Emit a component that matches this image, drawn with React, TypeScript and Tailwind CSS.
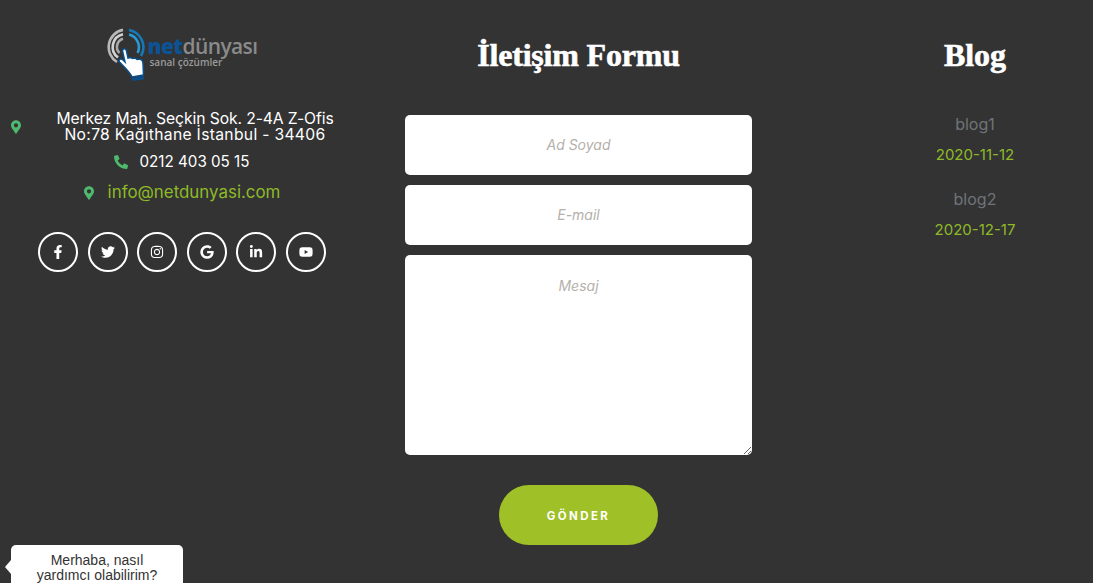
import React from 'react';
import {
  FaFacebookF,
  FaTwitter,
  FaInstagram,
  FaGoogle,
  FaLinkedinIn,
  FaYoutube,
  FaMapMarkerAlt,
  FaPhoneAlt,
} from 'react-icons/fa';

const socials = [FaFacebookF, FaTwitter, FaInstagram, FaGoogle, FaLinkedinIn, FaYoutube];

const blogs = [
  { title: 'blog1', date: '2020-11-12' },
  { title: 'blog2', date: '2020-12-17' },
];

const Logo: React.FC = () => (
  <div className="relative ml-[1px] h-[54px] w-[152px]">
    <svg viewBox="0 0 40 54" className="absolute left-0 top-0 h-[54px] w-[40px]" fill="none">
      <g strokeWidth="2.6">
        <path d="M16 1.9 A17.5 17.5 0 0 0 10 34" stroke="#b8b8b8" />
        <path d="M16 6.3 A13 13 0 0 0 11 29.5" stroke="#d2d2d2" />
        <path d="M16 10.8 A8.5 8.5 0 0 0 12.5 25" stroke="#a8a8a8" />
        <path d="M22 2 A17.5 17.5 0 0 1 34 28" stroke="#1479b8" />
        <path d="M22 6.5 A13 13 0 0 1 30.5 25" stroke="#2a9ad6" />
      </g>
      <path
        d="M15.5 23 C15.5 20 19 20 19.5 23 L21 30 L23.5 29.5 L25.5 30.5 L28 30 L30 31.5 L32.5 31 C35 31.5 36 33 36 35.5 L36.5 47 L25 49 C23 44 17.5 39.5 12.5 34 C11 31.5 13.5 30 16 32 L18 34 Z"
        fill="#ffffff"
        stroke="#0b4f8a"
        strokeWidth="1.5"
      />
      <path d="M24.5 50 L36.5 48 L37 51.5 L25 53 Z" fill="#0b4f8a" />
    </svg>
    <div className="absolute left-[41px] top-[9px] whitespace-nowrap font-['Open_Sans',sans-serif] text-[21px] leading-[18px] font-semibold tracking-[-0.6px] text-[#8a8a8a]">
      <span className="font-extrabold text-[#0b5394]">net</span>dünyası
    </div>
    <div className="absolute left-[43px] top-[29px] whitespace-nowrap font-['Open_Sans',sans-serif] text-[10px] leading-[11px] font-semibold text-[#9a9a9a]">
      sanal çözümler
    </div>
  </div>
);

export default function App() {
  return (
    <div className="relative h-[583px] w-full overflow-hidden bg-[#333333] font-['Inter',sans-serif]">
      <div className="flex">
        {/* Contact column */}
        <div className="flex w-[364px] flex-col items-center pt-7">
          <Logo />
          <div className="mt-[29px] flex w-full items-start text-[15.7px] leading-4 text-white">
            <FaMapMarkerAlt className="ml-[11px] mt-[9px] h-[14px] w-[10px] shrink-0 text-[#4fb96e]" />
            <p className="ml-[5px] flex-1 text-center">
              <span className="tracking-[-0.1px]">Merkez Mah. Seçkin Sok. 2-4A Z-Ofis</span>
              <br />
              <span className="tracking-[0.3px]">No:78 Kağıthane İstanbul - 34406</span>
            </p>
          </div>
          <div className="mt-[7px] flex h-6 items-center text-[15.2px] text-white">
            <FaPhoneAlt className="mr-[11px] h-[14px] w-[14px] text-[#4fb96e]" />
            <span>0212 403 05 15</span>
          </div>
          <div className="mt-[7px] flex h-6 items-center text-[16.9px] text-[#8fba28]">
            <FaMapMarkerAlt className="mr-[14px] h-[14px] w-[10px] text-[#4fb96e]" />
            <span>info@netdunyasi.com</span>
          </div>
          <div className="mt-[27px] flex gap-[9.6px]">
            {socials.map((Icon, i) => (
              <div
                key={i}
                className="flex h-10 w-10 items-center justify-center rounded-full border-2 border-white text-white"
              >
                <Icon className="h-[14px] w-[14px]" />
              </div>
            ))}
          </div>
        </div>

        {/* Form column */}
        <div className="ml-[41px] flex w-[347px] flex-col items-center">
          <h2 className="mt-[33px] h-[44px] font-['Liberation_Serif',serif] text-[32px] leading-[44px] font-bold tracking-[-0.2px] text-white [-webkit-text-stroke:0.6px_white]">
            İletişim Formu
          </h2>
          <form className="mt-[38px] flex w-full flex-col items-center">
            <input
              placeholder="Ad Soyad"
              className="h-[60px] w-full rounded-[5px] bg-white pb-[2px] text-center text-sm italic outline-none placeholder:text-[#b5b0ab]"
            />
            <input
              placeholder="E-mail"
              className="mt-[10px] h-[60px] w-full rounded-[5px] bg-white pb-[2px] text-center text-sm italic outline-none placeholder:text-[#b5b0ab]"
            />
            <textarea
              placeholder="Mesaj"
              className="mt-[10px] block h-[200px] w-full rounded-[5px] bg-white pt-[21px] text-center text-sm italic outline-none placeholder:text-[#b5b0ab]"
            />
            <button
              type="button"
              className="mt-[30px] h-[60px] w-[159px] rounded-full bg-[#9fc026] pt-[4px] text-[11.5px] font-bold tracking-[2.4px] text-white"
            >
              GÖNDER
            </button>
          </form>
        </div>

        {/* Blog column */}
        <div className="ml-[105px] flex w-[236px] flex-col items-center">
          <h2 className="mt-[33px] h-[44px] font-['Liberation_Serif',serif] text-[32px] leading-[44px] font-bold text-white [-webkit-text-stroke:0.6px_white]">
            Blog
          </h2>
          <div className="mt-[32px] flex flex-col items-center gap-[15px] text-[16px]">
            {blogs.map((b) => (
              <div key={b.title} className="flex flex-col items-center">
                <span className="h-[30px] leading-[30px] text-[#6f7378]">{b.title}</span>
                <span className="h-[30px] pt-[1px] text-[15px] leading-[30px] text-[#8fba28]">{b.date}</span>
              </div>
            ))}
          </div>
        </div>
      </div>

      {/* Chat bubble */}
      <div className="absolute left-[11px] top-[545px] h-[60px] w-[172px] rounded-[5px] bg-white px-2 pt-[8px] text-center font-['Liberation_Sans',sans-serif] text-[14px] leading-[15px] text-[#333333]">
        <span className="absolute -left-[6px] top-[15px] h-0 w-0 border-y-[7px] border-r-[6px] border-y-transparent border-r-white" />
        Merhaba, nasıl
        <br />
        yardımcı olabilirim?
      </div>
    </div>
  );
}
